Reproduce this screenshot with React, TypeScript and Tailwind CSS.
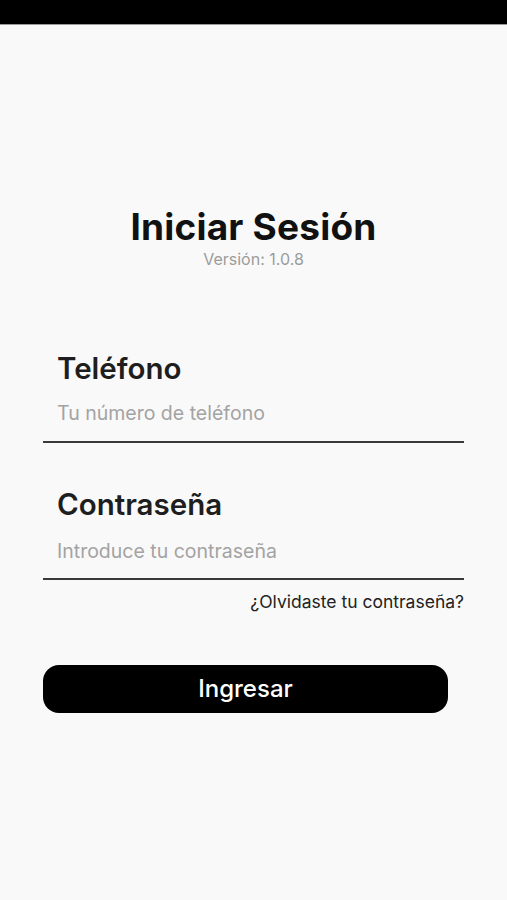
import React from 'react';

const font = { fontFamily: 'Inter, "Liberation Sans", Arial, sans-serif' };

export default function App() {
  return (
    <div className="min-h-[900px] w-full bg-[#f9f9f9] flex flex-col" style={font}>
      {/* barra de estado */}
      <div className="h-[25px] bg-black border-b border-[#9a9a9a]" />

      <div className="flex flex-col items-center pt-[182px]">
        <h1 className="text-[37px] font-bold leading-[40px] text-[#111] tracking-[0.2px]">Iniciar Sesión</h1>
        <p className="text-[16px] leading-[16px] text-[#9c9c9c] mt-[4px]">Versión: 1.0.8</p>
      </div>

      <div className="px-[43px] pt-[85px] flex flex-col">
        <div className="flex flex-col">
          <label className="pl-[14px] text-[29.5px] font-semibold leading-[32px] text-[#1e1e1e]">Teléfono</label>
          <input
            placeholder="Tu número de teléfono"
            className="pl-[14px] h-[59px] pt-[1px] bg-transparent text-[19.5px] outline-none border-b-2 border-[#3a3a3a] placeholder:text-[#a3a3a3]"
          />
        </div>

        <div className="flex flex-col mt-[45px]">
          <label className="pl-[14px] text-[29.5px] font-semibold leading-[32px] text-[#1e1e1e]">Contraseña</label>
          <input
            type="password"
            placeholder="Introduce tu contraseña"
            className="mt-[4px] pl-[14px] h-[56px] bg-transparent text-[19.5px] outline-none border-b-2 border-[#3a3a3a] placeholder:text-[#a3a3a3]"
          />
        </div>

        <a className="self-end mt-[12px] text-[17.5px] leading-[20px] text-[#222]">¿Olvidaste tu contraseña?</a>

        <button className="mt-[53px] w-[405px] h-[48px] rounded-[16px] bg-black text-white text-[24px] font-medium">
          Ingresar
        </button>
      </div>
    </div>
  );
}
